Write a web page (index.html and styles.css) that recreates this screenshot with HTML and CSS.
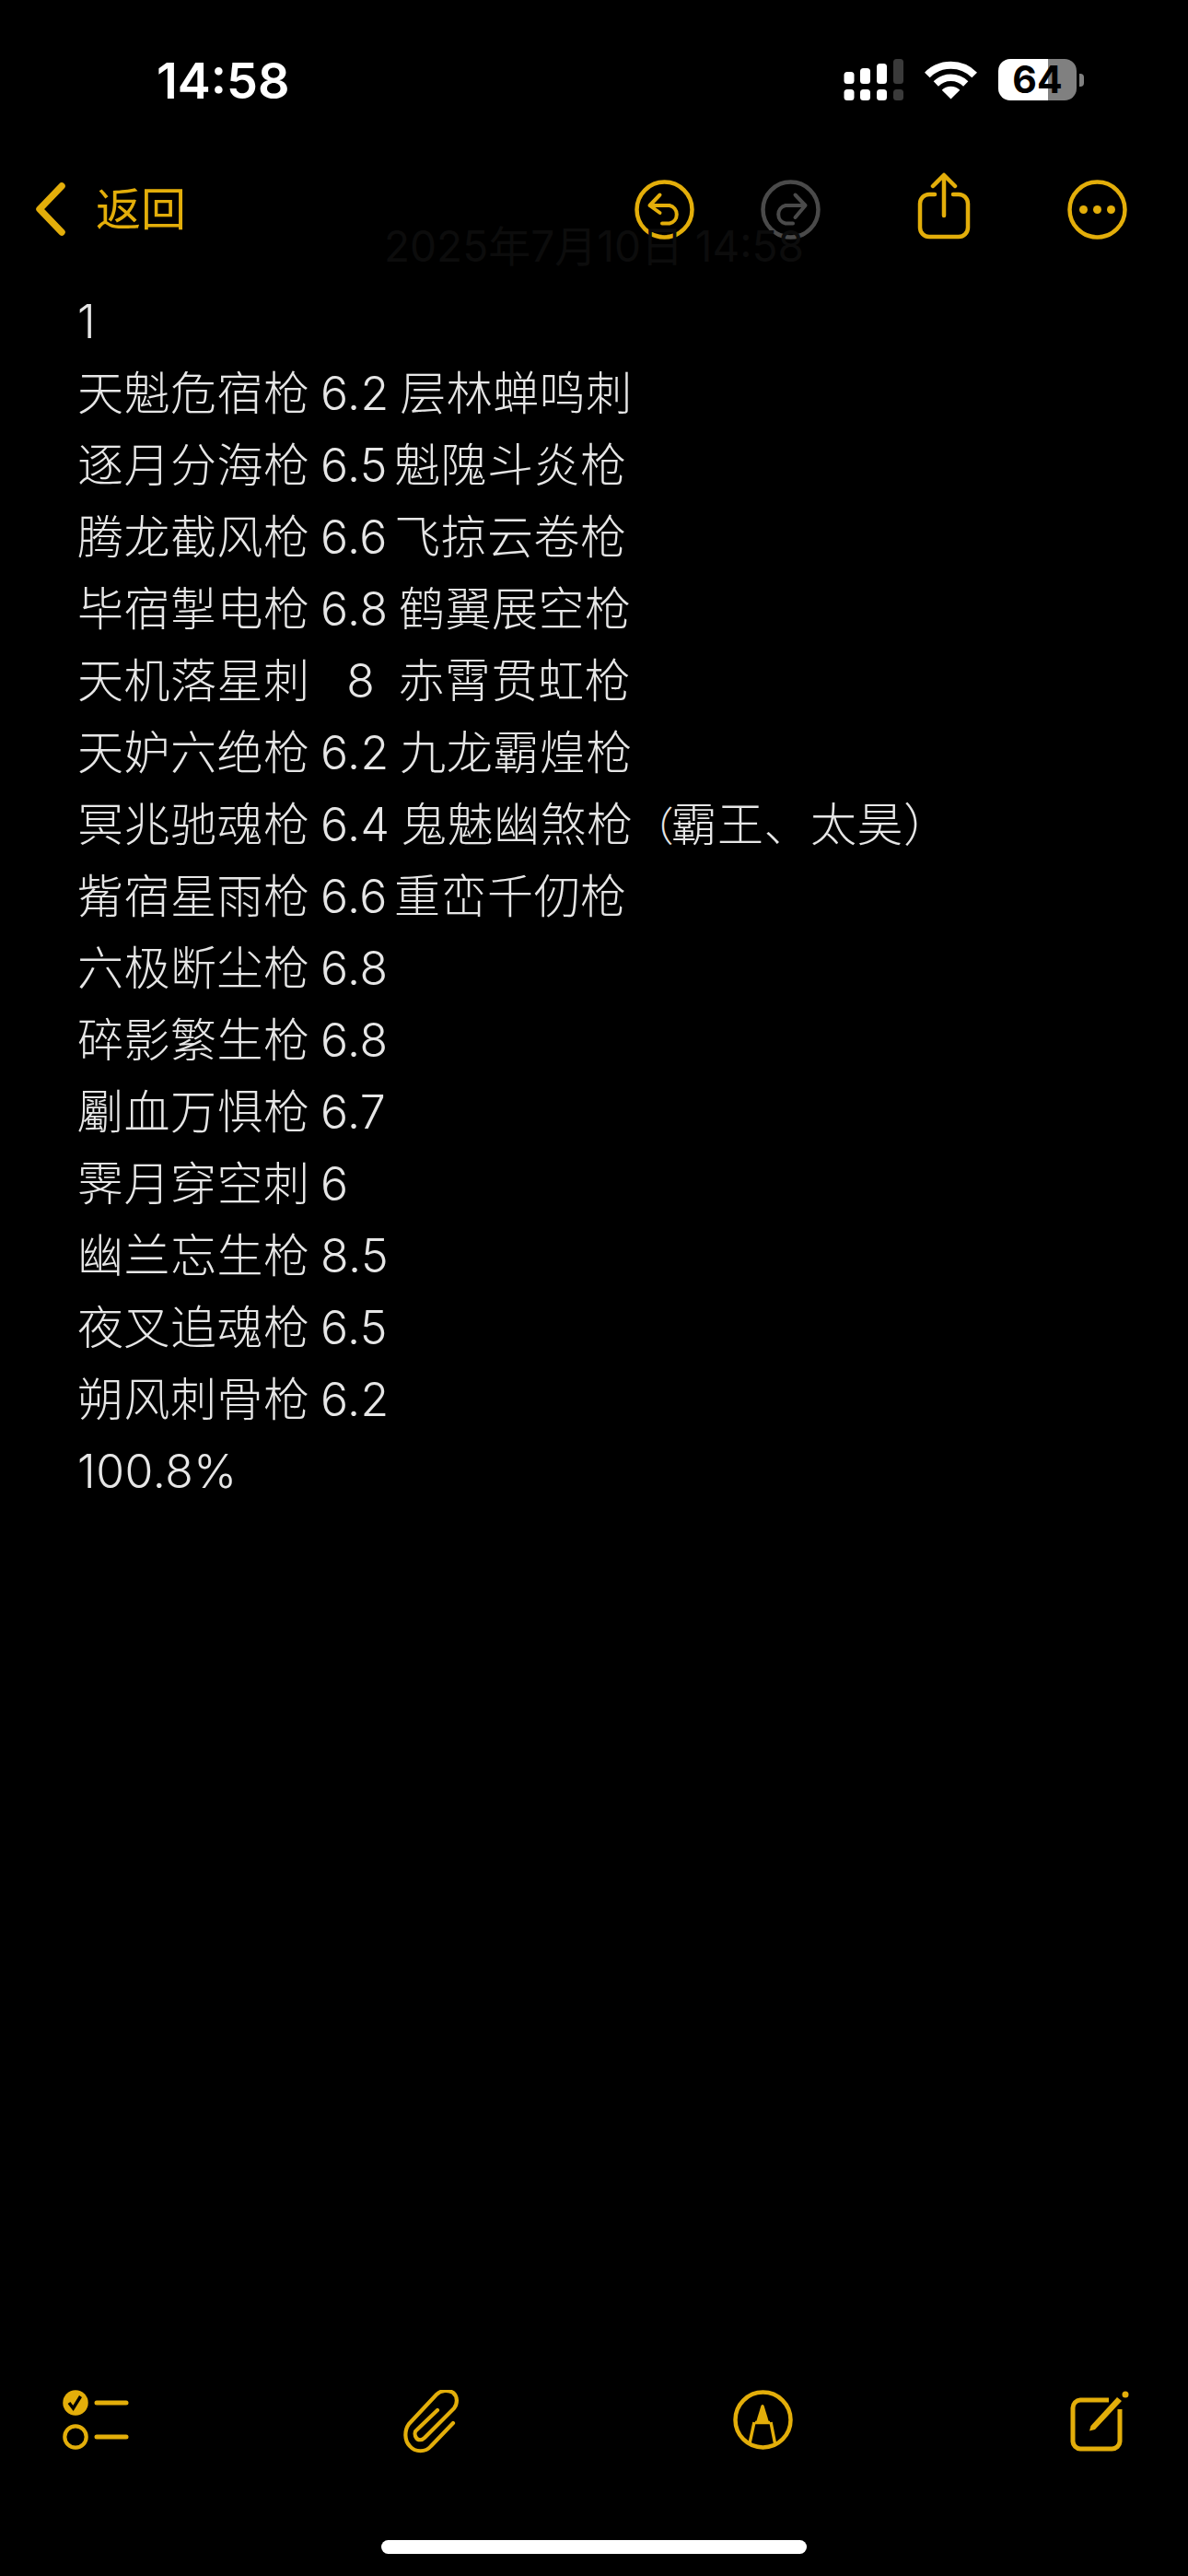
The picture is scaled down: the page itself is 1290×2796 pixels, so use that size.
FILE: index.html
```html
<!DOCTYPE html>
<html lang="zh-CN">
<head>
  <meta charset="UTF-8">
  <meta name="viewport" content="width=device-width, initial-scale=1.0">
  <title>备忘录</title>
  <link rel="stylesheet" href="styles.css">
</head>
<body>

  <!-- Status bar -->
  <div class="status">
    <span class="time">14:58</span>
    <div class="status-right">
      <svg class="signal" width="65" height="45" viewBox="0 0 65 45">
        <rect x="0.5" y="14" width="11" height="13" rx="3.5" fill="#fff"/>
        <rect x="18" y="10" width="11" height="17" rx="3.5" fill="#fff"/>
        <rect x="36" y="5" width="11" height="22" rx="3.5" fill="#fff"/>
        <rect x="54" y="0" width="11" height="27" rx="3.5" fill="#3a3a3a"/>
        <rect x="0.5" y="33" width="11" height="12" rx="3.5" fill="#fff"/>
        <rect x="18" y="33" width="11" height="12" rx="3.5" fill="#fff"/>
        <rect x="36" y="33" width="11" height="12" rx="3.5" fill="#fff"/>
        <rect x="54" y="33" width="11" height="12" rx="3.5" fill="#3a3a3a"/>
      </svg>
      <svg class="wifi" width="57" height="43" viewBox="0 0 57 43">
        <path d="M2.8 16.5 A36 36 0 0 1 54.2 16.5" fill="none" stroke="#fff" stroke-width="8"/>
        <path d="M12.3 26 A23 23 0 0 1 44.700 26" fill="none" stroke="#fff" stroke-width="7.500"/>
        <path d="M28.5 42.500 L18.700 32.700 A14 14 0 0 1 38.300 32.700 Z" fill="#fff"/>
      </svg>
      <div class="battery"><span class="battery-num">64</span></div>
      <div class="battery-cap"></div>
    </div>
  </div>

  <!-- Top nav -->
  <div class="nav">
    <svg class="chevron" width="36" height="60" viewBox="0 0 36 60">
      <path d="M30 5 L6 30 L30 55" fill="none" stroke="#e3ae0a" stroke-width="7.500" stroke-linecap="round" stroke-linejoin="round"/>
    </svg>
    <span class="back">返回</span>
    <div class="ghost-title">2025年7月10日 14:58</div>
    <div class="nav-icons">
      <svg class="icon" width="65" height="65" viewBox="0 0 65 65">
        <circle cx="32.500" cy="32.500" r="30" fill="none" stroke="#e3ae0a" stroke-width="4.500"/>
        <path d="M27.500 16.500 L16.500 28 L27.500 36 M16.500 28 H38 A10 10 0 0 1 38 47.500 H30" fill="none" stroke="#e3ae0a" stroke-width="4" stroke-linecap="round" stroke-linejoin="round"/>
      </svg>
      <svg class="icon icon-redo" width="65" height="65" viewBox="0 0 65 65">
        <circle cx="32.500" cy="32.500" r="30" fill="none" stroke="#4a4a4a" stroke-width="4.500"/>
        <path d="M37.500 16.500 L48.500 28 L37.500 41 M48.500 28 H27 A10 10 0 0 0 27 47.500 H35" fill="none" stroke="#4a4a4a" stroke-width="4" stroke-linecap="round" stroke-linejoin="round"/>
      </svg>
      <svg class="icon icon-share" width="64" height="78" viewBox="0 0 64 78">
        <path d="M22 26 H16 A10 10 0 0 0 6 36 V62 A10 10 0 0 0 16 72 H48 A10 10 0 0 0 58 62 V36 A10 10 0 0 0 48 26 H42" fill="none" stroke="#e3ae0a" stroke-width="4.500" stroke-linecap="round"/>
        <path d="M32 49 V6 M20 17 L32 5 L44 17" fill="none" stroke="#e3ae0a" stroke-width="4.500" stroke-linecap="round" stroke-linejoin="round"/>
      </svg>
      <svg class="icon icon-more" width="65" height="65" viewBox="0 0 65 65">
        <circle cx="32.500" cy="32.500" r="30" fill="none" stroke="#e3ae0a" stroke-width="4.500"/>
        <circle cx="17.500" cy="32.500" r="4.500" fill="#e3ae0a"/>
        <circle cx="32.500" cy="32.500" r="4.500" fill="#e3ae0a"/>
        <circle cx="47.500" cy="32.500" r="4.500" fill="#e3ae0a"/>
      </svg>
    </div>
  </div>

  <!-- Note body -->
  <div class="note">
    <p>1</p>
    <p>天魁危宿枪 6.2 层林蝉鸣刺</p>
    <p>逐月分海枪 6.5<span class="gap">魁隗斗炎枪</span></p>
    <p>腾龙截风枪 6.6<span class="gap">飞掠云卷枪</span></p>
    <p>毕宿掣电枪 6.8 鹤翼展空枪</p>
    <p>天机落星刺   <span class="solo">8</span>  赤霄贯虹枪</p>
    <p>天妒六绝枪 6.2 九龙霸煌枪</p>
    <p>冥兆驰魂枪 6.4 鬼魅幽煞枪<span class="paren-open">（</span>霸王、太昊）</p>
    <p>觜宿星雨枪 6.6<span class="gap">重峦千仞枪</span></p>
    <p>六极断尘枪 6.8</p>
    <p>碎影繁生枪 6.8</p>
    <p>劚血万惧枪 6.7</p>
    <p>霁月穿空刺 6</p>
    <p>幽兰忘生枪 8.5</p>
    <p>夜叉追魂枪 6.5</p>
    <p>朔风刺骨枪 6.2</p>
    <p>100.8%</p>
  </div>

  <!-- Bottom toolbar -->
  <div class="toolbar">
    <svg width="72" height="66" viewBox="0 0 72 66">
      <circle cx="14" cy="14" r="13.750" fill="#e3ae0a"/>
      <path d="M7 14 L11.500 20 L19.500 7" fill="none" stroke="#000" stroke-width="3.500"/>
      <path d="M37 14 H69" fill="none" stroke="#e3ae0a" stroke-width="5" stroke-linecap="round"/>
      <circle cx="14" cy="51" r="11.700" fill="none" stroke="#e3ae0a" stroke-width="4.200"/>
      <path d="M37 51 H69" fill="none" stroke="#e3ae0a" stroke-width="5" stroke-linecap="round"/>
    </svg>
    <svg class="tool-clip" width="62" height="69" viewBox="0 0 62 69">
      <path d="M55 36 L31 61 C25 68 14 68 8 61 C2 55 2 44 7 37 L37 5 C42 0 50 0 55 3 C60 7 60 15 56 20 L24 52 C21 55 17 55 15 52 C13 49 13 45 16 43 L38 22" fill="none" stroke="#e3ae0a" stroke-width="4.200" stroke-linecap="round" stroke-linejoin="round"/>
    </svg>
    <svg class="tool-markup" width="65" height="66" viewBox="0 0 65 66">
      <circle cx="32.500" cy="32.500" r="30" fill="none" stroke="#e3ae0a" stroke-width="4.500"/>
      <path d="M30.500 17 Q32 15 33.500 17 L39 35 H25 Z" fill="#e3ae0a"/>
      <path d="M18 58 L23 35 M41 35 L45.500 58" fill="none" stroke="#e3ae0a" stroke-width="3.500"/>
      <path d="M24 35.500 H40" fill="none" stroke="#e3ae0a" stroke-width="3.500"/>
    </svg>
    <svg width="68" height="68" viewBox="0 0 68 68">
      <path d="M44 11 H13 A8.500 8.500 0 0 0 5 19.500 V56 A8.500 8.500 0 0 0 13 64 H47.500 A8.500 8.500 0 0 0 56 56 V21" fill="none" stroke="#e3ae0a" stroke-width="5"/>
      <path d="M53 8 L58 12 L29 43 L23 44.500 L24.500 39 Z" fill="#e3ae0a"/>
      <circle cx="62" cy="5" r="3.500" fill="#e3ae0a"/>
    </svg>
  </div>

  <div class="home-bar"></div>

</body>
</html>
```

FILE: styles.css
```css
* {
  box-sizing: border-box;
}
body {
  margin: 0;
  width: 1290px;
  height: 2796px;
  background-color: #000;
  display: flex;
  flex-direction: column;
  font-family: Inter, "Noto Sans CJK SC", sans-serif;
  overflow: hidden;
}

/* Status bar */
.status {
  height: 190px;
  padding: 64px 113px 0 170px;
  display: flex;
  justify-content: space-between;
  align-items: flex-start;
}
.time {
  color: #fff;
  font-size: 54px;
  font-weight: 600;
  line-height: 47px;
}
.status-right {
  display: flex;
  align-items: flex-start;
}
.signal {
  margin-right: 23px;
}
.wifi {
  margin-top: 1px;
  margin-right: 23px;
}
.battery {
  width: 85px;
  height: 45px;
  border-radius: 13px;
  background: linear-gradient(to right, #fff 64%, #808080 64%);
  display: flex;
  justify-content: center;
  align-items: center;
}
.battery-num {
  color: #000;
  font-size: 41px;
  font-weight: 700;
  line-height: 45px;
}
.battery-cap {
  width: 5px;
  height: 14px;
  margin: 16px 0 0 3px;
  background-color: #808080;
  border-radius: 0 4px 4px 0;
}

/* Top nav */
.nav {
  position: relative;
  height: 74px;
  padding: 0 66px 0 37px;
  display: flex;
  align-items: center;
}
.chevron {
  margin-top: -1px;
}
.back {
  margin-left: 31px;
  margin-top: 2px;
  color: #e3ae0a;
  font-size: 49px;
  line-height: 60px;
}
.ghost-title {
  position: absolute;
  left: 0;
  right: 0;
  top: 55px;
  text-align: center;
  color: #0c0c0c;
  font-size: 46px;
  line-height: 44px;
}
.nav-icons {
  margin-left: auto;
  display: flex;
  align-items: center;
}
.icon-redo {
  margin-left: 72px;
}
.icon-share {
  margin-left: 102px;
  margin-top: -6px;
}
.icon-more {
  margin-left: 102px;
}

/* Note body */
.note {
  margin-top: 46px;
  padding-left: 84px;
  color: #e6e6e6;
  font-size: 50px;
  font-weight: 300;
  line-height: 78px;
  letter-spacing: 0.5px;
  word-spacing: -3px;
}
.note p {
  height: 78px;
  margin: 0;
  white-space: pre;
}
.gap {
  margin-left: 7px;
}
.solo {
  margin: 0 2px 0 5px;
}
/* the bracket sits tighter than a full em in the original */
.paren-open {
  font-size: 44px;
  line-height: 0;
  letter-spacing: -3px;
}

/* Bottom toolbar */
.toolbar {
  margin-top: auto;
  padding: 0 62px 0 68px;
  display: flex;
  justify-content: space-between;
  align-items: flex-start;
}
.tool-clip {
  margin-left: -2px;
}
.tool-markup {
  margin-left: -1px;
}

/* Home indicator */
.home-bar {
  width: 462px;
  height: 15px;
  margin: 94px 0 24px 414px;
  background-color: #fff;
  border-radius: 8px;
}
```
